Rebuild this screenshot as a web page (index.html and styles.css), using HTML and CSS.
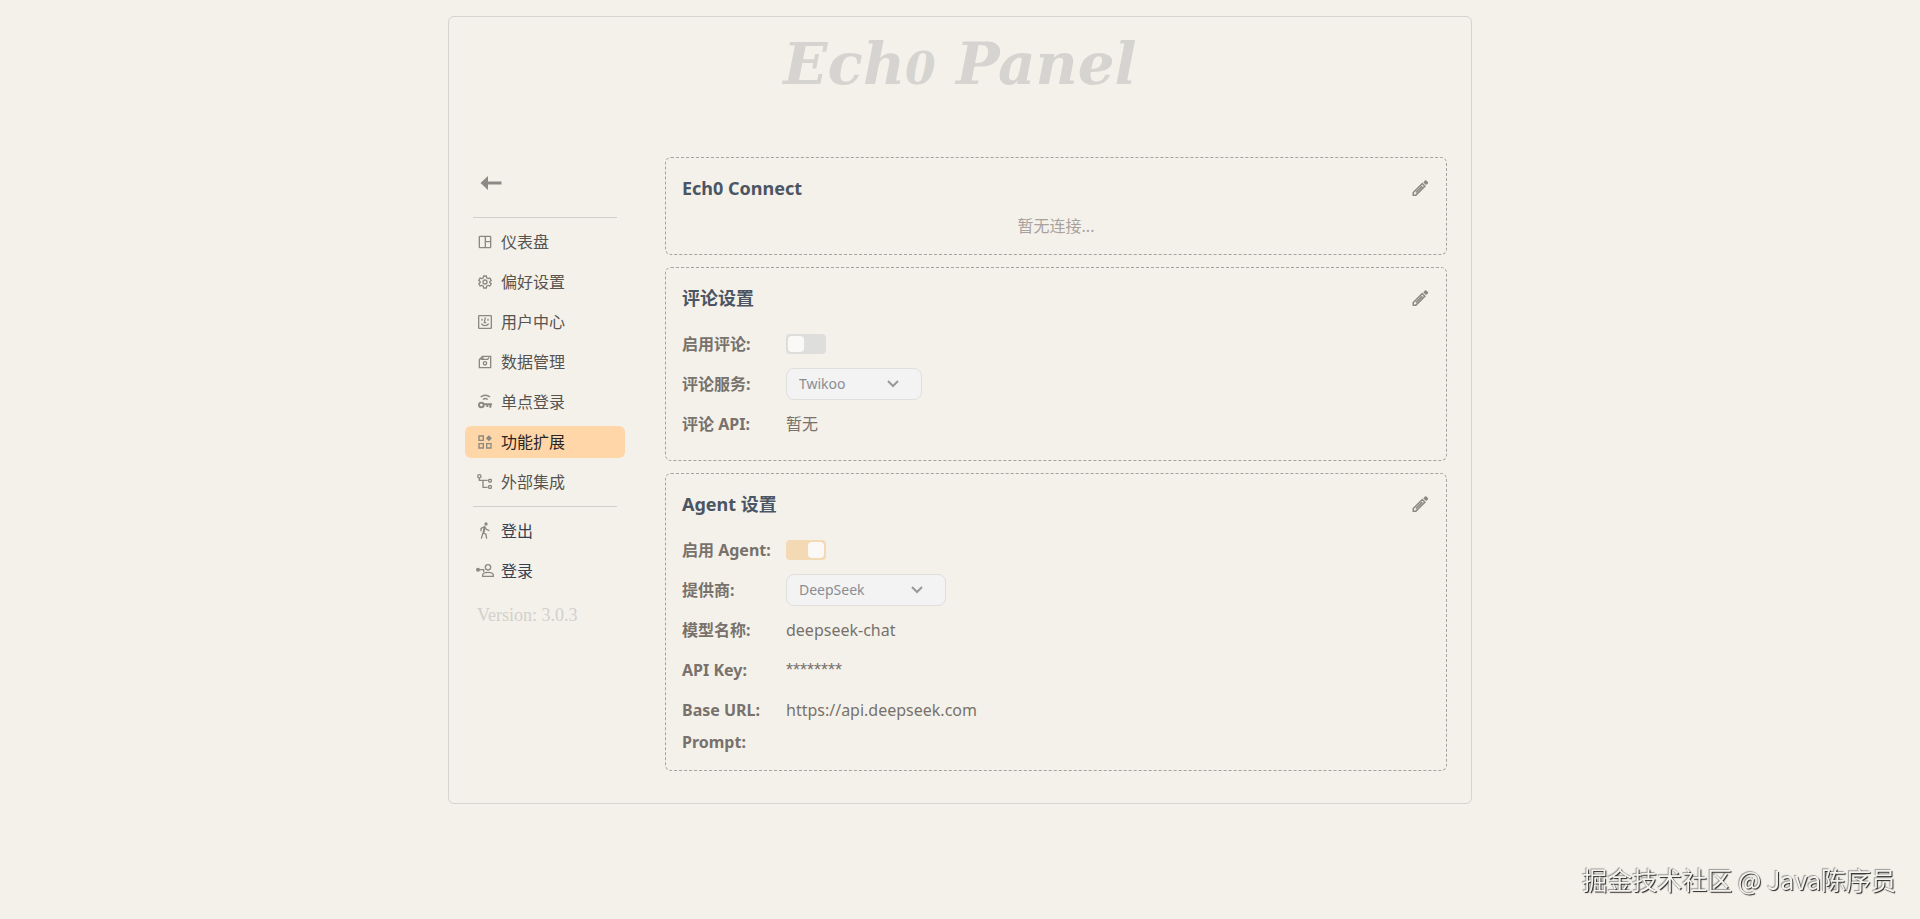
FILE: index.html
```html
<!DOCTYPE html>
<html lang="zh-CN">
<head>
<meta charset="utf-8">
<meta name="viewport" content="width=device-width, initial-scale=1">
<title>Ech0 Panel</title>
<link rel="stylesheet" href="styles.css">
</head>
<body>
<main class="panel">
  <h1 class="panel-title">Ech<span class="oldstyle">0</span> Panel</h1>
  <div class="panel-body">
    <aside class="sidebar">
      <button class="back" type="button" aria-label="返回">
        <svg viewBox="0 0 24 24" width="24" height="24"><path d="M1.500 12 9 5V10.500H22.500v3H9V19z" fill="currentColor"/></svg>
      </button>
      <nav class="nav">
        <a class="nav-item" href="#"><svg class="icon" viewBox="0 0 24 24"><rect x="3.500" y="3.500" width="17" height="17" rx="1"/><path d="M12.500 4v16M12.500 11.500H20"/></svg>仪表盘</a>
        <a class="nav-item" href="#"><svg class="icon" viewBox="0 0 24 24"><path d="M10 3h4l.6 2.800 2 1.100L19.300 6l2 3.500L19.200 11.500v1.200l2.100 1.900-2 3.400-2.700-.9-2 1.100L14 21h-4l-.6-2.800-2-1.100-2.700.9-2-3.400 2.100-1.900v-1.200L2.700 9.500l2-3.500 2.700.9 2-1.100z"/><circle cx="12" cy="12" r="3"/></svg>偏好设置</a>
        <a class="nav-item" href="#"><svg class="icon" viewBox="0 0 24 24"><rect x="2.500" y="2.500" width="19" height="19" rx="1"/><path d="M7.500 7v3M16.500 7v3M12.500 5 11 13h3M6.500 14.500c2.500 4 8.500 4 11 0"/></svg>用户中心</a>
        <a class="nav-item" href="#"><svg class="icon" viewBox="0 0 24 24"><path d="M3.500 8.500 8 3.500h12.500v17h-17zM7.500 8h8.500l2-3"/><path class="solid" d="M7 5h3v4H5z"/><circle cx="12" cy="14" r="2.500"/></svg>数据管理</a>
        <a class="nav-item" href="#"><svg class="icon" viewBox="0 0 24 24"><circle class="heavy" cx="6.500" cy="16.500" r="3.500"/><path class="heavy" d="M10 15.500h12.500M20 15.500v5M15.500 15.500v4"/><path d="M5.500 4.500c4-3.500 10-3.500 14 0M9 8.300c2-1.800 5-1.800 7 0"/></svg>单点登录</a>
        <a class="nav-item active" href="#" aria-current="page"><svg class="icon" viewBox="0 0 24 24"><path d="M3 3h6.500v6.500H3zM3 14.500h6.500V21H3zM14.500 14.500H21V21h-6.500z"/><path class="solid" d="m17.800 1.800 4.500 4.500-4.500 4.500-4.500-4.500z"/></svg>功能扩展</a>
        <a class="nav-item" href="#"><svg class="icon" viewBox="0 0 24 24"><circle cx="3.500" cy="3.500" r="2.500"/><path d="M3.500 6v3.500H16M9 9.500V20h7"/><rect x="17.500" y="8" width="4" height="4" rx="1"/><rect x="17.500" y="17.500" width="4" height="4" rx="1"/></svg>外部集成</a>
      </nav>
      <nav class="nav account">
        <a class="nav-item" href="#"><svg class="icon" viewBox="0 0 24 24"><circle class="solid" cx="13.500" cy="1.500" r="2.500"/><path d="M6 12.500V8l5.500-2.500 2.500 4 4.500 2M11.500 6l-2 8.500 4 2.500 1 6.500M9 14.500l-2.500 9"/><path class="heavy" d="m11.500 6.500-1.500 7"/></svg>登出</a>
        <a class="nav-item" href="#"><svg class="icon" viewBox="0 0 24 24"><circle cx="16.500" cy="6.500" r="4"/><path d="M8.500 20v-1.500c0-3 4-4.500 8-4.500s8 1.500 8 4.500v1.500zM1 10h9v3.500"/><circle class="solid" cx="1.500" cy="10" r="3"/></svg>登录</a>
      </nav>
      <p class="version">Version: 3.0.3</p>
    </aside>

    <div class="cards">
      <section class="card">
        <header class="card-head">
          <h2>Ech0 Connect</h2>
          <button class="edit" type="button" aria-label="编辑 Ech0 Connect"><svg class="icon" viewBox="0 0 24 24"><path d="M3 21.500v-3.500L15 6l3.500 3.500-12 12zM6.500 18l8.500-8.500"/><path class="solid" d="m16.500 4.500 2-2.500q1-.8 2 0l2 2q.8 1 0 2L20 8z"/></svg></button>
        </header>
        <p class="empty">暂无连接...</p>
      </section>

      <section class="card">
        <header class="card-head">
          <h2>评论设置</h2>
          <button class="edit" type="button" aria-label="编辑评论设置"><svg class="icon" viewBox="0 0 24 24"><path d="M3 21.500v-3.500L15 6l3.500 3.500-12 12zM6.500 18l8.500-8.500"/><path class="solid" d="m16.500 4.500 2-2.500q1-.8 2 0l2 2q.8 1 0 2L20 8z"/></svg></button>
        </header>
        <div class="row"><label class="name" for="comment-on">启用评论:</label><input class="switch" id="comment-on" type="checkbox" role="switch" disabled></div>
        <div class="row"><label class="name" for="comment-service">评论服务:</label>
          <span class="select-wrap"><select class="select" id="comment-service" disabled><option>Twikoo</option></select><svg class="chevron" viewBox="0 0 12 8"><path d="m1 1 5 5 5-5"/></svg></span></div>
        <div class="row"><span class="name">评论 API:</span><span>暂无</span></div>
      </section>

      <section class="card">
        <header class="card-head">
          <h2>Agent 设置</h2>
          <button class="edit" type="button" aria-label="编辑 Agent 设置"><svg class="icon" viewBox="0 0 24 24"><path d="M3 21.500v-3.500L15 6l3.500 3.500-12 12zM6.500 18l8.500-8.500"/><path class="solid" d="m16.500 4.500 2-2.500q1-.8 2 0l2 2q.8 1 0 2L20 8z"/></svg></button>
        </header>
        <div class="row"><label class="name" for="agent-on">启用 Agent:</label><input class="switch" id="agent-on" type="checkbox" role="switch" checked disabled></div>
        <div class="row"><label class="name" for="provider">提供商:</label>
          <span class="select-wrap large"><select class="select" id="provider" disabled><option>DeepSeek</option></select><svg class="chevron" viewBox="0 0 12 8"><path d="m1 1 5 5 5-5"/></svg></span></div>
        <div class="row"><span class="name">模型名称:</span><span>deepseek-chat</span></div>
        <div class="row"><span class="name">API Key:</span><span class="secret">********</span></div>
        <div class="row"><span class="name">Base URL:</span><span>https://api.deepseek.com</span></div>
        <div class="row short"><span class="name">Prompt:</span></div>
      </section>
    </div>
  </div>
</main>
<div class="watermark">掘金技术社区 @ Java陈序员</div>
</body>
</html>
```
FILE: styles.css
```css
* {
  box-sizing: border-box;
}

body {
  margin: 0;
  padding: 16px;
  background: #f4f1ea;
  color: #78716c;
  font: 16px/24px "Noto Sans", "Noto Sans CJK SC", sans-serif;
}

h1,
h2,
p {
  margin: 0;
}

button {
  padding: 0;
  border: 0;
  background: none;
  color: inherit;
  cursor: pointer;
}

.panel {
  max-width: 1024px;
  margin: 0 auto;
  padding: 16px 24px 32px 16px;
  border: 1px solid #d6d3d1;
  border-radius: 6px;
}

.panel-title {
  margin-bottom: 62px;
  padding-left: 8px;
  color: #d6d4d0;
  font: italic bold 58px/62px Georgia, "DejaVu Serif", serif;
  text-align: center;
}

.oldstyle {
  font-size: 44px;
  line-height: 1;
}

.panel-body {
  display: grid;
  grid-template-columns: 160px minmax(0, 1fr);
  gap: 40px;
}

.sidebar {
  padding-top: 12px;
}

.back {
  display: flex;
  align-items: center;
  height: 28px;
  margin: 0 0 20px 14px;
  color: #8c8987;
}

.nav {
  position: relative;
  display: flex;
  flex-direction: column;
  gap: 8px;
  padding-top: 9px;
}

.nav::before {
  content: "";
  position: absolute;
  top: 0;
  right: 8px;
  left: 8px;
  border-top: 1px solid #d0cfcb;
}

.account {
  margin-top: 8px;
}

.nav-item {
  display: flex;
  align-items: center;
  gap: 8px;
  height: 32px;
  padding: 0 12px;
  border-radius: 6px;
  color: #57534e;
  text-decoration: none;
}

.nav-item.active {
  background: #ffd6a7;
  color: #292524;
}

.account .nav-item {
  color: #374151;
}

.icon {
  flex: none;
  width: 16px;
  height: 16px;
  fill: none;
  stroke: #8c8882;
  stroke-width: 2;
  overflow: visible;
}

.icon .heavy {
  stroke-width: 3;
}

.icon .solid {
  fill: #8c8882;
  stroke: none;
}

.version {
  margin: 16px 0 0 12px;
  color: #d2d0cc;
  font: 18px/24px Georgia, "Liberation Serif", serif;
}

.cards {
  display: flex;
  flex-direction: column;
  gap: 12px;
}

.card {
  padding: 16px;
  border: 1px dashed #a8a29e;
  border-radius: 6px;
}

.card-head {
  display: flex;
  align-items: center;
  justify-content: space-between;
  margin-bottom: 12px;
}

.card-head h2 {
  color: #4b5563;
  font-size: 18px;
  line-height: 28px;
}

.edit {
  display: flex;
  margin-right: 1px;
}

.edit .icon {
  width: 18px;
  height: 18px;
}

.empty {
  color: #a8a29e;
  text-align: center;
}

.row {
  display: flex;
  align-items: center;
  height: 40px;
}

.row.short {
  height: 24px;
}

.name {
  width: 104px;
  font-weight: 700;
}

.secret {
  font-family: "Liberation Sans", sans-serif;
  font-size: 18px;
}

.switch {
  appearance: none;
  display: flex;
  width: 40px;
  height: 20px;
  margin: 0;
  padding: 2px;
  border-radius: 4px;
  background: #dededc;
}

.switch::before {
  content: "";
  width: 16px;
  border-radius: 4px;
  background: #faf9f7;
}

.switch:checked {
  justify-content: flex-end;
  background: #f3dab5;
}

.select-wrap {
  position: relative;
  width: 136px;
}

.select-wrap.large {
  width: 160px;
}

.select {
  appearance: none;
  display: block;
  width: 100%;
  height: 32px;
  padding: 0 12px;
  border: 1px solid #dfdfdd;
  border-radius: 8px;
  background: #f3f3f3;
  color: #8a8d93;
  font: 14px/20px "Noto Sans", "Noto Sans CJK SC", sans-serif;
  opacity: 1;
}

.chevron {
  position: absolute;
  top: 12px;
  right: 23px;
  width: 12px;
  height: 8px;
  fill: none;
  stroke: #999;
  stroke-width: 2;
}

.watermark {
  position: fixed;
  right: 24px;
  bottom: 22px;
  color: #f5f3ee;
  font: 25px/36px "Noto Sans CJK SC", sans-serif;
  text-shadow: 1px 1px 1px #222, -1px -1px 1px #999;
}
```
